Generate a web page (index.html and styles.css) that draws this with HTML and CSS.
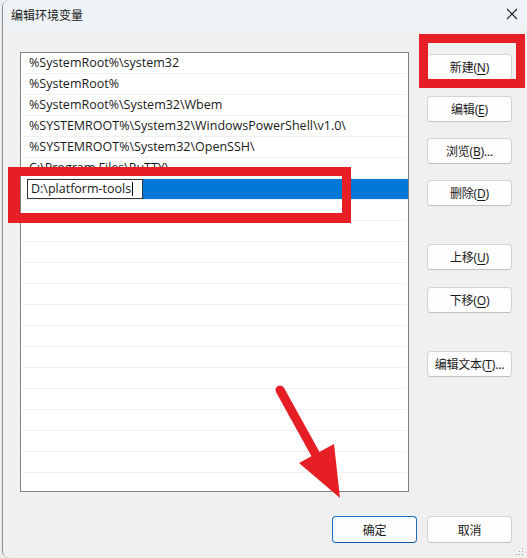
FILE: index.html
```html
<!DOCTYPE html>
<html lang="zh-CN">
<head>
<meta charset="utf-8">
<title>编辑环境变量</title>
<link rel="stylesheet" href="styles.css">
</head>
<body>
<div class="strip"></div>
<div class="dialog">
  <div class="titlebar">
    <span class="title">编辑环境变量</span>
    <svg class="close" width="12" height="12" viewBox="0 0 12 12"><path d="M1 1L11 11M11 1L1 11" stroke="#1b1b1b" stroke-width="1.1" fill="none"/></svg>
  </div>
  <div class="main">
    <div class="list">
      <div class="row">%SystemRoot%\system32</div>
      <div class="row">%SystemRoot%</div>
      <div class="row">%SystemRoot%\System32\Wbem</div>
      <div class="row">%SYSTEMROOT%\System32\WindowsPowerShell\v1.0\</div>
      <div class="row">%SYSTEMROOT%\System32\OpenSSH\</div>
      <div class="row">C:\Program Files\PuTTY\</div>
      <div class="row editing"><span class="edit">D:\platform-tools<span class="caret"></span></span><span class="sel"></span></div>
      <div class="row"></div><div class="row"></div><div class="row"></div><div class="row"></div>
      <div class="row"></div><div class="row"></div><div class="row"></div><div class="row"></div>
      <div class="row"></div><div class="row"></div><div class="row"></div><div class="row"></div>
      <div class="row"></div><div class="row"></div>
    </div>
    <div class="side">
      <button class="btn b-new">新建(<u>N</u>)</button>
      <button class="btn b-gap">编辑(<u>E</u>)</button>
      <button class="btn b-gap">浏览(<u>B</u>)...</button>
      <button class="btn b-gap">删除(<u>D</u>)</button>
      <button class="btn b-big">上移(<u>U</u>)</button>
      <button class="btn b-gap2">下移(<u>O</u>)</button>
      <button class="btn b-big">编辑文本(<u>T</u>)...</button>
    </div>
  </div>
  <div class="footer">
    <button class="btn default">确定</button>
    <button class="btn">取消</button>
  </div>
  <svg class="grip" width="8" height="8" viewBox="0 0 8 8"><g fill="#9a9a9a"><rect x="6" y="0" width="1" height="1"/><rect x="3" y="3" width="1" height="1"/><rect x="6" y="3" width="1" height="1"/><rect x="0" y="6" width="1" height="1"/><rect x="3" y="6" width="1" height="1"/><rect x="6" y="6" width="1" height="1"/></g></svg>
  <div class="mark mark-new"></div>
  <div class="mark mark-edit"></div>
  <svg class="arrow" width="524" height="558" viewBox="0 0 524 558">
    <line x1="277" y1="390" x2="313" y2="455" stroke="#e61e25" stroke-width="9" stroke-linecap="round"/>
    <polygon points="296,463 331,444 337,498" fill="#e61e25"/>
  </svg>
</div>
</body>
</html>
```
FILE: styles.css
```css
html, body {
  margin: 0;
  padding: 0;
}
body {
  width: 527px;
  height: 558px;
  overflow: hidden;
  display: flex;
  background: #f3f3f3;
  font-family: "Noto Sans", "Noto Sans CJK SC", sans-serif;
  font-size: 12px;
  color: #1a1a1a;
}
.strip {
  width: 2px;
  flex: none;
  background: #ececec;
}
.dialog {
  flex: 1;
  position: relative;
  background: #f0f0f0;
  border-left: 1px solid #8c8c8c;
  border-top-left-radius: 7px;
  border-bottom-left-radius: 7px;
  display: flex;
  flex-direction: column;
}
.titlebar {
  height: 28px;
  flex: none;
  background: #eef3f7;
  border-top-left-radius: 7px;
  display: flex;
  align-items: center;
  justify-content: space-between;
  padding: 0 9px 0 8px;
}
.title {
  font-family: "Noto Sans CJK SC", sans-serif;
  font-size: 12px;
  color: #1a1a1a;
}
.close {
  display: block;
}
.main {
  display: flex;
  padding: 24px 0 0 17px;
}
.list {
  width: 389px;
  height: 440px;
  box-sizing: border-box;
  border: 1px solid #828282;
  background: #fff;
  overflow: hidden;
  padding: 0 1px;
}
.row {
  height: 20px;
  line-height: 20px;
  border-bottom: 1px solid #f0f0f0;
  margin: 0 1px;
  padding-left: 6px;
  white-space: nowrap;
  font-family: "Open Sans", "Noto Sans CJK SC", sans-serif;
  font-size: 12.5px;
  color: #1a1a1a;
}
.row.editing {
  display: flex;
  padding-left: 4px;
  margin-right: -2px;
}
.edit {
  width: 116px;
  height: 20px;
  box-sizing: border-box;
  border: 1px solid #333;
  background: #fff;
  padding-left: 3px;
  line-height: 18px;
  display: flex;
  align-items: center;
}
.caret {
  display: inline-block;
  width: 1px;
  height: 14px;
  background: #000;
  margin-left: 1px;
}
.sel {
  flex: 1;
  background: #0078d7;
}
.side {
  display: flex;
  flex-direction: column;
  margin-left: 18px;
  padding-top: 2px;
}
.btn {
  width: 85px;
  height: 26px;
  box-sizing: border-box;
  border: 1px solid #d3d3d3;
  border-bottom-color: #c2c2c2;
  border-radius: 4px;
  background: #fdfdfd;
  font-family: "Noto Sans", "Noto Sans CJK SC", sans-serif;
  font-size: 12px;
  color: #1a1a1a;
  padding: 0;
  letter-spacing: -0.2px;
}
.btn u {
  text-decoration-thickness: 1px;
  text-underline-offset: 2px;
}
.b-gap { margin-top: 16px; }
.b-big { margin-top: 38px; }
.b-gap2 { margin-top: 17px; }
.footer {
  display: flex;
  justify-content: flex-end;
  gap: 10px;
  padding: 24px 15px 0 0;
}
.footer .btn {
  height: 27px;
}
.btn.default {
  border: 1px solid #1a6fc4;
  border-bottom-color: #0b5cad;
}
.grip {
  position: absolute;
  right: 3px;
  bottom: 2px;
}
.mark {
  position: absolute;
  box-sizing: border-box;
  border-style: solid;
  border-color: #e61e25;
}
.mark-new {
  left: 416px;
  top: 34px;
  width: 106px;
  height: 54px;
  border-width: 9px;
}
.mark-edit {
  left: 5px;
  top: 167px;
  width: 343px;
  height: 56px;
  border-width: 9px 9px 10px 12px;
}
.arrow {
  position: absolute;
  left: 0;
  top: 0;
  pointer-events: none;
}
```
